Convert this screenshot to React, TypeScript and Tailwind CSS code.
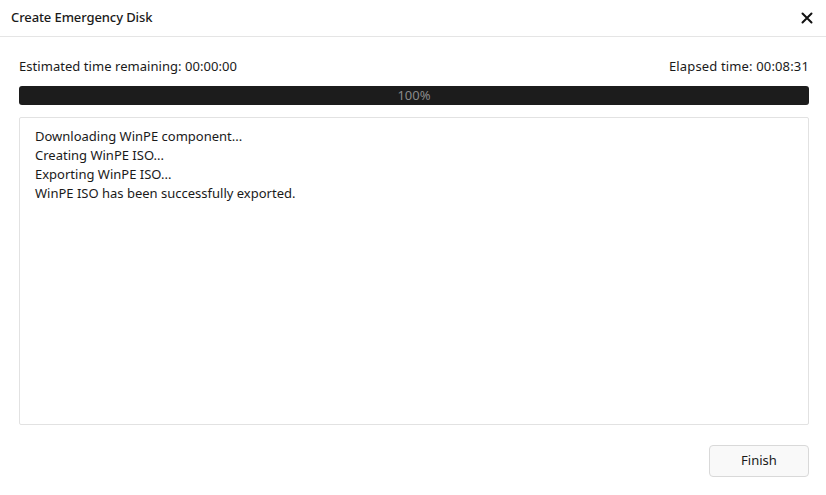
export default function App() {
  const lines = [
    "Downloading WinPE component...",
    "Creating WinPE ISO...",
    "Exporting WinPE ISO...",
    "WinPE ISO has been successfully exported.",
  ];

  return (
    <div
      className="w-[826px] h-[495px] bg-white flex flex-col text-[#1a1a1a] overflow-hidden"
      style={{ fontFamily: '"Noto Sans", "Liberation Sans", sans-serif' }}
    >
      {/* Title bar */}
      <div className="h-[37px] flex items-center justify-between pl-[11px] pr-[12px] border-b border-[#e5e5e5]">
        <span className="text-[13px] font-medium tracking-[-0.1px]">Create Emergency Disk</span>
        <svg width="12" height="12" viewBox="0 0 12 12" className="mr-[1px]">
          <path d="M1.5 1.5 L10.5 10.5 M10.5 1.5 L1.5 10.5" stroke="#111" strokeWidth="2" strokeLinecap="round" />
        </svg>
      </div>

      <div className="flex-1 flex flex-col pl-[19px] pr-[17px]">
        {/* Times */}
        <div className="flex justify-between items-center h-[30px] mt-[15px] text-[13px]">
          <span className="tracking-[0.05px]">Estimated time remaining: 00:00:00</span>
          <span className="tracking-[0.15px]">Elapsed time: 00:08:31</span>
        </div>

        {/* Progress bar */}
        <div className="h-[19px] mt-[4px] rounded-[3px] bg-[#1c1c1c] flex items-center justify-center">
          <span className="text-[13px] text-[#8a8a8a] leading-none">100%</span>
        </div>

        {/* Log box */}
        <div className="h-[308px] mt-[12px] border border-[#e2e2e2] rounded-[2px] px-[15px] pt-[9px]">
          {lines.map((l) => (
            <div key={l} className="text-[13px] leading-[19px]">
              {l}
            </div>
          ))}
        </div>

        {/* Footer */}
        <div className="flex justify-end mt-[20px]">
          <button className="w-[100px] h-[32px] rounded-[4px] border border-[#d9d9d9] bg-[#f9f9f9] text-[13px] text-[#1a1a1a]">
            Finish
          </button>
        </div>
      </div>
    </div>
  );
}
